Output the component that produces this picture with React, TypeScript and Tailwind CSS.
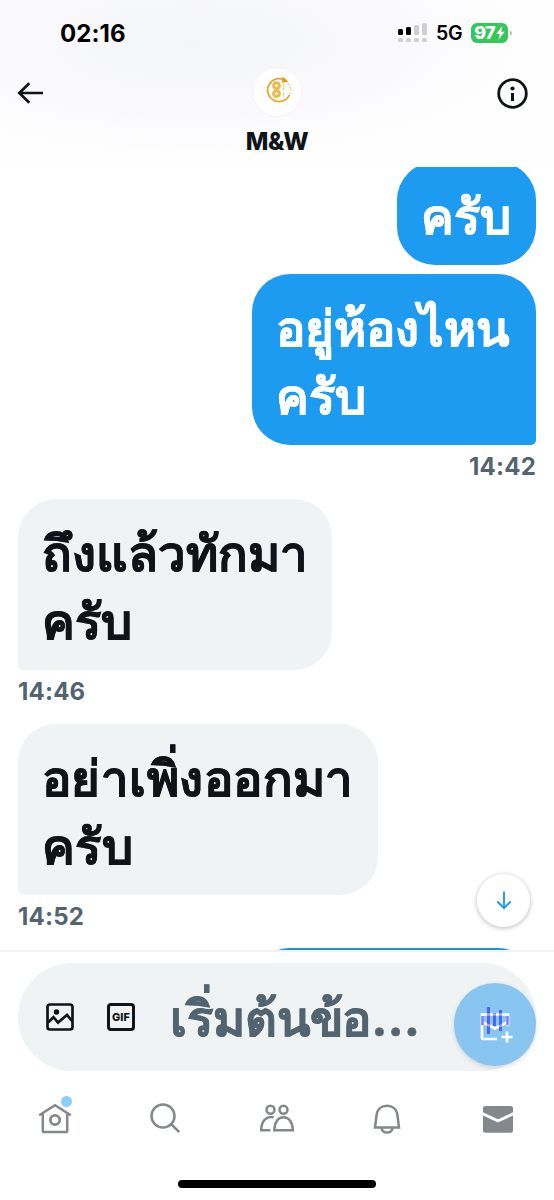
import React from "react";

type Message = {
  lines: string[];
  mine?: boolean;
  time?: string;
  shape: string;
};

const messages: Message[] = [
  {
    lines: ["ครับ"],
    mine: true,
    shape: "-mt-[5px] h-[103px] w-[139px] rounded-[38px]",
  },
  {
    lines: ["อยู่ห้องไหน", "ครับ"],
    mine: true,
    time: "14:42",
    shape: "mt-[9px] h-[171px] w-[284px] rounded-[38px] rounded-br-[5px]",
  },
  {
    lines: ["ถึงแล้วทักมา", "ครับ"],
    time: "14:46",
    shape: "h-[171px] w-[314px] rounded-[38px] rounded-bl-[5px]",
  },
  {
    lines: ["อย่าเพิ่งออกมา", "ครับ"],
    time: "14:52",
    shape: "h-[171px] w-[360px] rounded-[38px] rounded-bl-[5px] tracking-[0.45px]",
  },
];

const signalBars = [
  { height: "h-[6px]", color: "bg-black" },
  { height: "h-[8px]", color: "bg-black" },
  { height: "h-[10px]", color: "bg-[#cfcfcf]" },
  { height: "h-[12px]", color: "bg-[#cfcfcf]" },
];

const StatusBar = () => (
  <div className="flex h-[67px] items-center justify-between pr-[42px] pl-[60px]">
    <span className="text-[24px] leading-none font-bold tracking-[0.1px] text-black">02:16</span>
    <div className="-mt-[2px] flex items-center">
      <div className="flex items-end gap-[3px]">
        {signalBars.map((bar) => (
          <div key={bar.height} className="flex flex-col gap-[3px]">
            <span className={`w-[5px] rounded-[1.5px] ${bar.height} ${bar.color}`} />
            <span className="h-[4px] w-[5px] rounded-[1.5px] bg-[#cfcfcf]" />
          </div>
        ))}
      </div>
      <span className="mt-[2px] ml-[9px] w-[27px] text-[19.5px] leading-none font-semibold tracking-[-0.3px] text-black">
        5G
      </span>
      <div className="ml-[8px] flex h-[20px] w-[37px] items-center justify-center rounded-[6px] bg-[#34c759]">
        <span className="text-[18px] leading-none font-extrabold tracking-[-0.8px] text-white">
          97
        </span>
        <svg className="ml-px h-[14px] w-[9px]" viewBox="0 0 9 14" fill="#fff">
          <path d="M6.4 0 .3 8h3.5L2.4 14 8.7 5.7H5.2z" />
        </svg>
      </div>
      <span className="ml-[2px] h-[4px] w-[2px] rounded-r-full bg-[#b5b5b5]" />
    </div>
  </div>
);

const Avatar = () => (
  <div className="flex h-[50px] w-[50px] items-center justify-center rounded-full border border-[#f5f2f3] bg-white">
    <svg className="-mt-[5px] ml-[3px] h-[28px] w-[28px]" viewBox="0 0 28 28" fill="none" stroke="#eaa630">
      <path d="M18.500 3.500A11.500 11.500 0 1 0 24.500 19" strokeWidth="1.700" />
      <path d="M23.200 7.500a11.500 11.500 0 0 1 2.400 7.500M25.200 16.500a11.500 11.500 0 0 1-1 3" strokeWidth="1" strokeDasharray="2 1.500" />
      <path d="m17.500.500 6 5-6.500 1.500z" fill="#e89b1b" stroke="none" />
      <circle cx="11.500" cy="9.700" r="2.900" stroke="#edb84e" strokeWidth="3" />
      <circle cx="11.500" cy="17.700" r="2.900" stroke="#edb84e" strokeWidth="3" />
      <path d="M18.500 8v7M18.500 17v4" stroke="#f0cc82" strokeWidth="1.600" strokeDasharray="2.400 1" />
    </svg>
  </div>
);

const Header = () => (
  <header className="h-[167px] bg-[radial-gradient(ellipse_at_35%_25%,#f4f5f6_0%,#fafafc_42%,#fefeff_65%)]">
    <StatusBar />
    <div className="grid grid-cols-[1fr_auto_1fr] items-start pr-[26px] pl-[17px]">
      <button aria-label="Back" className="mt-[15px] w-[32px]">
        <svg className="h-[22px] w-[27px]" viewBox="0 0 27 22" fill="none" stroke="#0f1419" strokeWidth="2.700">
          <path d="M26 11H3M12.300 1.200 2.300 11l10 9.800" />
        </svg>
      </button>
      <div className="ml-[9px] flex flex-col items-center">
        <Avatar />
        <h1 className="mt-[13px] text-[24px] leading-none font-extrabold tracking-[-0.3px] text-[#0f1419]">
          M&amp;W
        </h1>
      </div>
      <button aria-label="Info" className="mt-[11px] justify-self-end">
        <svg className="h-[31px] w-[31px]" viewBox="0 0 31 31" fill="none">
          <circle cx="15.500" cy="15.500" r="13.800" stroke="#0f1419" strokeWidth="2.800" />
          <circle cx="15.500" cy="10.500" r="2.100" fill="#0f1419" />
          <path d="M15.500 15v8" stroke="#0f1419" strokeWidth="3" />
        </svg>
      </button>
    </div>
  </header>
);

const Bubble: React.FC<{ message: Message }> = ({ message }) => (
  <div className={`flex flex-col ${message.mine ? "items-end" : "items-start"}`}>
    <div
      className={`flex shrink-0 flex-col px-[24px] pt-[21px] text-[49px] leading-[68px] font-bold whitespace-nowrap [-webkit-text-stroke:0.5px_currentColor] ${message.shape} ${
        message.mine ? "bg-[#1d9bf0] text-white" : "bg-[#eff3f4] text-[#0f1419]"
      }`}
    >
      {message.lines.map((line) => (
        <span key={line}>{line}</span>
      ))}
    </div>
    {message.time && (
      <time className="h-[54px] pt-[10px] text-[24px] leading-[24px] font-bold tracking-[0.2px] text-[#536471]">
        {message.time}
      </time>
    )}
  </div>
);

const Composer = () => (
  <div className="relative h-[121px] border-t-2 border-[#eff3f4] bg-white px-[18px] pt-[11px]">
    <div className="flex h-[108px] items-center rounded-full bg-[#eff3f4] pl-[28px]">
      <svg className="h-[28px] w-[28px]" viewBox="0 0 28 28" fill="none" stroke="#0f1419" strokeWidth="2.700">
        <rect x="1.500" y="1.500" width="25" height="25" rx="2.500" />
        <path d="m2 19.500 5.500-5.300 4.500 5.300 9-7.500 5.500 6.500" />
        <circle cx="10.500" cy="9" r="2.700" fill="#0f1419" stroke="none" />
      </svg>
      <div className="ml-[33px] flex h-[28px] w-[28px] items-center justify-center rounded-[4px] border-[3px] border-[#0f1419] text-[11px] leading-none font-extrabold text-[#0f1419]">
        GIF
      </div>
      <span className="mt-[3px] ml-[35px] text-[49px] leading-[68px] font-bold tracking-[-0.1px] whitespace-nowrap text-[#536471] [-webkit-text-stroke:0.5px_currentColor]">
        เริ่มต้นข้อ...
      </span>
    </div>
    <button
      aria-label="New message"
      className="absolute top-[31px] right-[18px] flex h-[83px] w-[82px] items-center justify-center rounded-full bg-[#88c5f1] shadow-[0_2px_5px_rgba(0,0,0,0.12)]"
    >
      <svg className="ml-[3px] h-[38px] w-[34px]" viewBox="0 0 34 38" fill="none">
        <path d="M28 20V8.500H2v23c0 1 .6 1.500 1.500 1.500H17M2 16l13 6.500L28 16" stroke="#fff" strokeWidth="2.700" />
        <path d="M27 25.500v11M21.500 31h11" stroke="#fff" strokeWidth="2.700" />
        <path d="M8.500 1v27M14.500 7v13M20.500 4v21" stroke="#4a66f2" strokeWidth="3" />
        <path d="M2.500 10v9M27.500 10v9" stroke="#8178f5" strokeWidth="2.500" />
        <path d="M7 8.500h3M13 8.500h3M19 8.500h3M7 18.500l3 1.500M19 20.500l3-1.500" stroke="#b3a0fa" strokeWidth="2.500" />
      </svg>
    </button>
  </div>
);

const HomeIcon = () => (
  <div className="relative">
    <svg className="h-[34px] w-[34px]" viewBox="0 0 34 34" fill="none" stroke="#84888b" strokeWidth="2.500">
      <path d="M1.200 14.300 17 4.200l15.800 10.100M4.800 12.500v17.200c0 .9.500 1.300 1.300 1.300h21.800c.8 0 1.300-.4 1.300-1.300V12.500" />
      <circle cx="17" cy="19" r="4.700" strokeWidth="2.800" />
    </svg>
    <span className="absolute -top-[5px] right-[0px] h-[11px] w-[11px] rounded-full bg-[#8ecdf8]" />
  </div>
);

const BottomNav = () => (
  <nav className="grid h-[98px] grid-cols-5 justify-items-center pt-[15px]" aria-label="Main navigation">
    <div className="mt-[15px]">
      <HomeIcon />
    </div>
    <svg className="mt-[16px] mr-[2px] h-[32px] w-[32px]" viewBox="0 0 32 32" fill="none" stroke="#84888b" strokeWidth="2.500">
      <circle cx="14" cy="14" r="11.500" />
      <path d="m22.200 22.200 8 8" strokeWidth="2.600" />
    </svg>
    <svg className="mt-[16px] h-[32px] w-[36px]" viewBox="0 0 36 32" fill="none" stroke="#84888b" strokeWidth="2.500">
      <circle cx="11.500" cy="7.700" r="4" />
      <circle cx="24.500" cy="7.700" r="4" />
      <path d="M14.800 15.400C7.500 13.600 2.300 19 2.200 28.300h9.300" />
      <path d="M15.300 28.300c.3-8 3.700-13 9.200-13s9 5 9.400 13z" />
    </svg>
    <svg className="mt-[17px] mr-px h-[32px] w-[32px]" viewBox="0 0 32 32" fill="none" stroke="#84888b" strokeWidth="2.500">
      <path d="M4 24.500 5.600 12C6.300 6 10.600 2.700 16 2.700S25.700 6 26.400 12L28 24.500z" />
      <path d="M10.300 25c.8 3 3 4.600 5.700 4.600s4.900-1.600 5.700-4.600" />
    </svg>
    <svg className="mt-[17px] mr-px h-[32px] w-[30px]" viewBox="0 0 30 32" fill="#84888b">
      <path d="M0 9.300V5.200C0 4 .8 3 2.200 3h25.600C29.200 3 30 4 30 5.200v4.100l-15 7z" />
      <path d="m0 12.500 15 7 15-7v15c0 1.300-.9 2.200-2.200 2.200H2.200C.9 29.700 0 28.800 0 27.500z" />
    </svg>
  </nav>
);

const App: React.FC = () => {
  return (
    <div className="flex h-[1200px] w-[554px] flex-col overflow-hidden bg-white font-['Inter','Liberation_Sans',sans-serif]">
      <Header />
      <main className="relative h-[783px] overflow-hidden px-[18px]">
        {messages.map((message, i) => (
          <Bubble key={i} message={message} />
        ))}
        <div className="-mt-px ml-[234px] h-[103px] w-[284px] rounded-[38px] bg-[#1d8fe0]" />
        <button
          aria-label="Scroll to latest"
          className="absolute right-[24px] bottom-[23px] flex h-[53px] w-[53px] items-center justify-center rounded-full bg-white shadow-[0_1px_5px_rgba(0,0,0,0.28)]"
        >
          <svg className="h-[19px] w-[16px]" viewBox="0 0 16 19" fill="none" stroke="#1d9bf0" strokeWidth="1.900">
            <path d="M8 .500v17M1.300 10.500 8 17.200l6.700-6.700" />
          </svg>
        </button>
      </main>
      <Composer />
      <BottomNav />
      <div className="mx-auto mt-[11px] h-[8px] w-[198px] rounded-full bg-black" />
    </div>
  );
};

export default App;
